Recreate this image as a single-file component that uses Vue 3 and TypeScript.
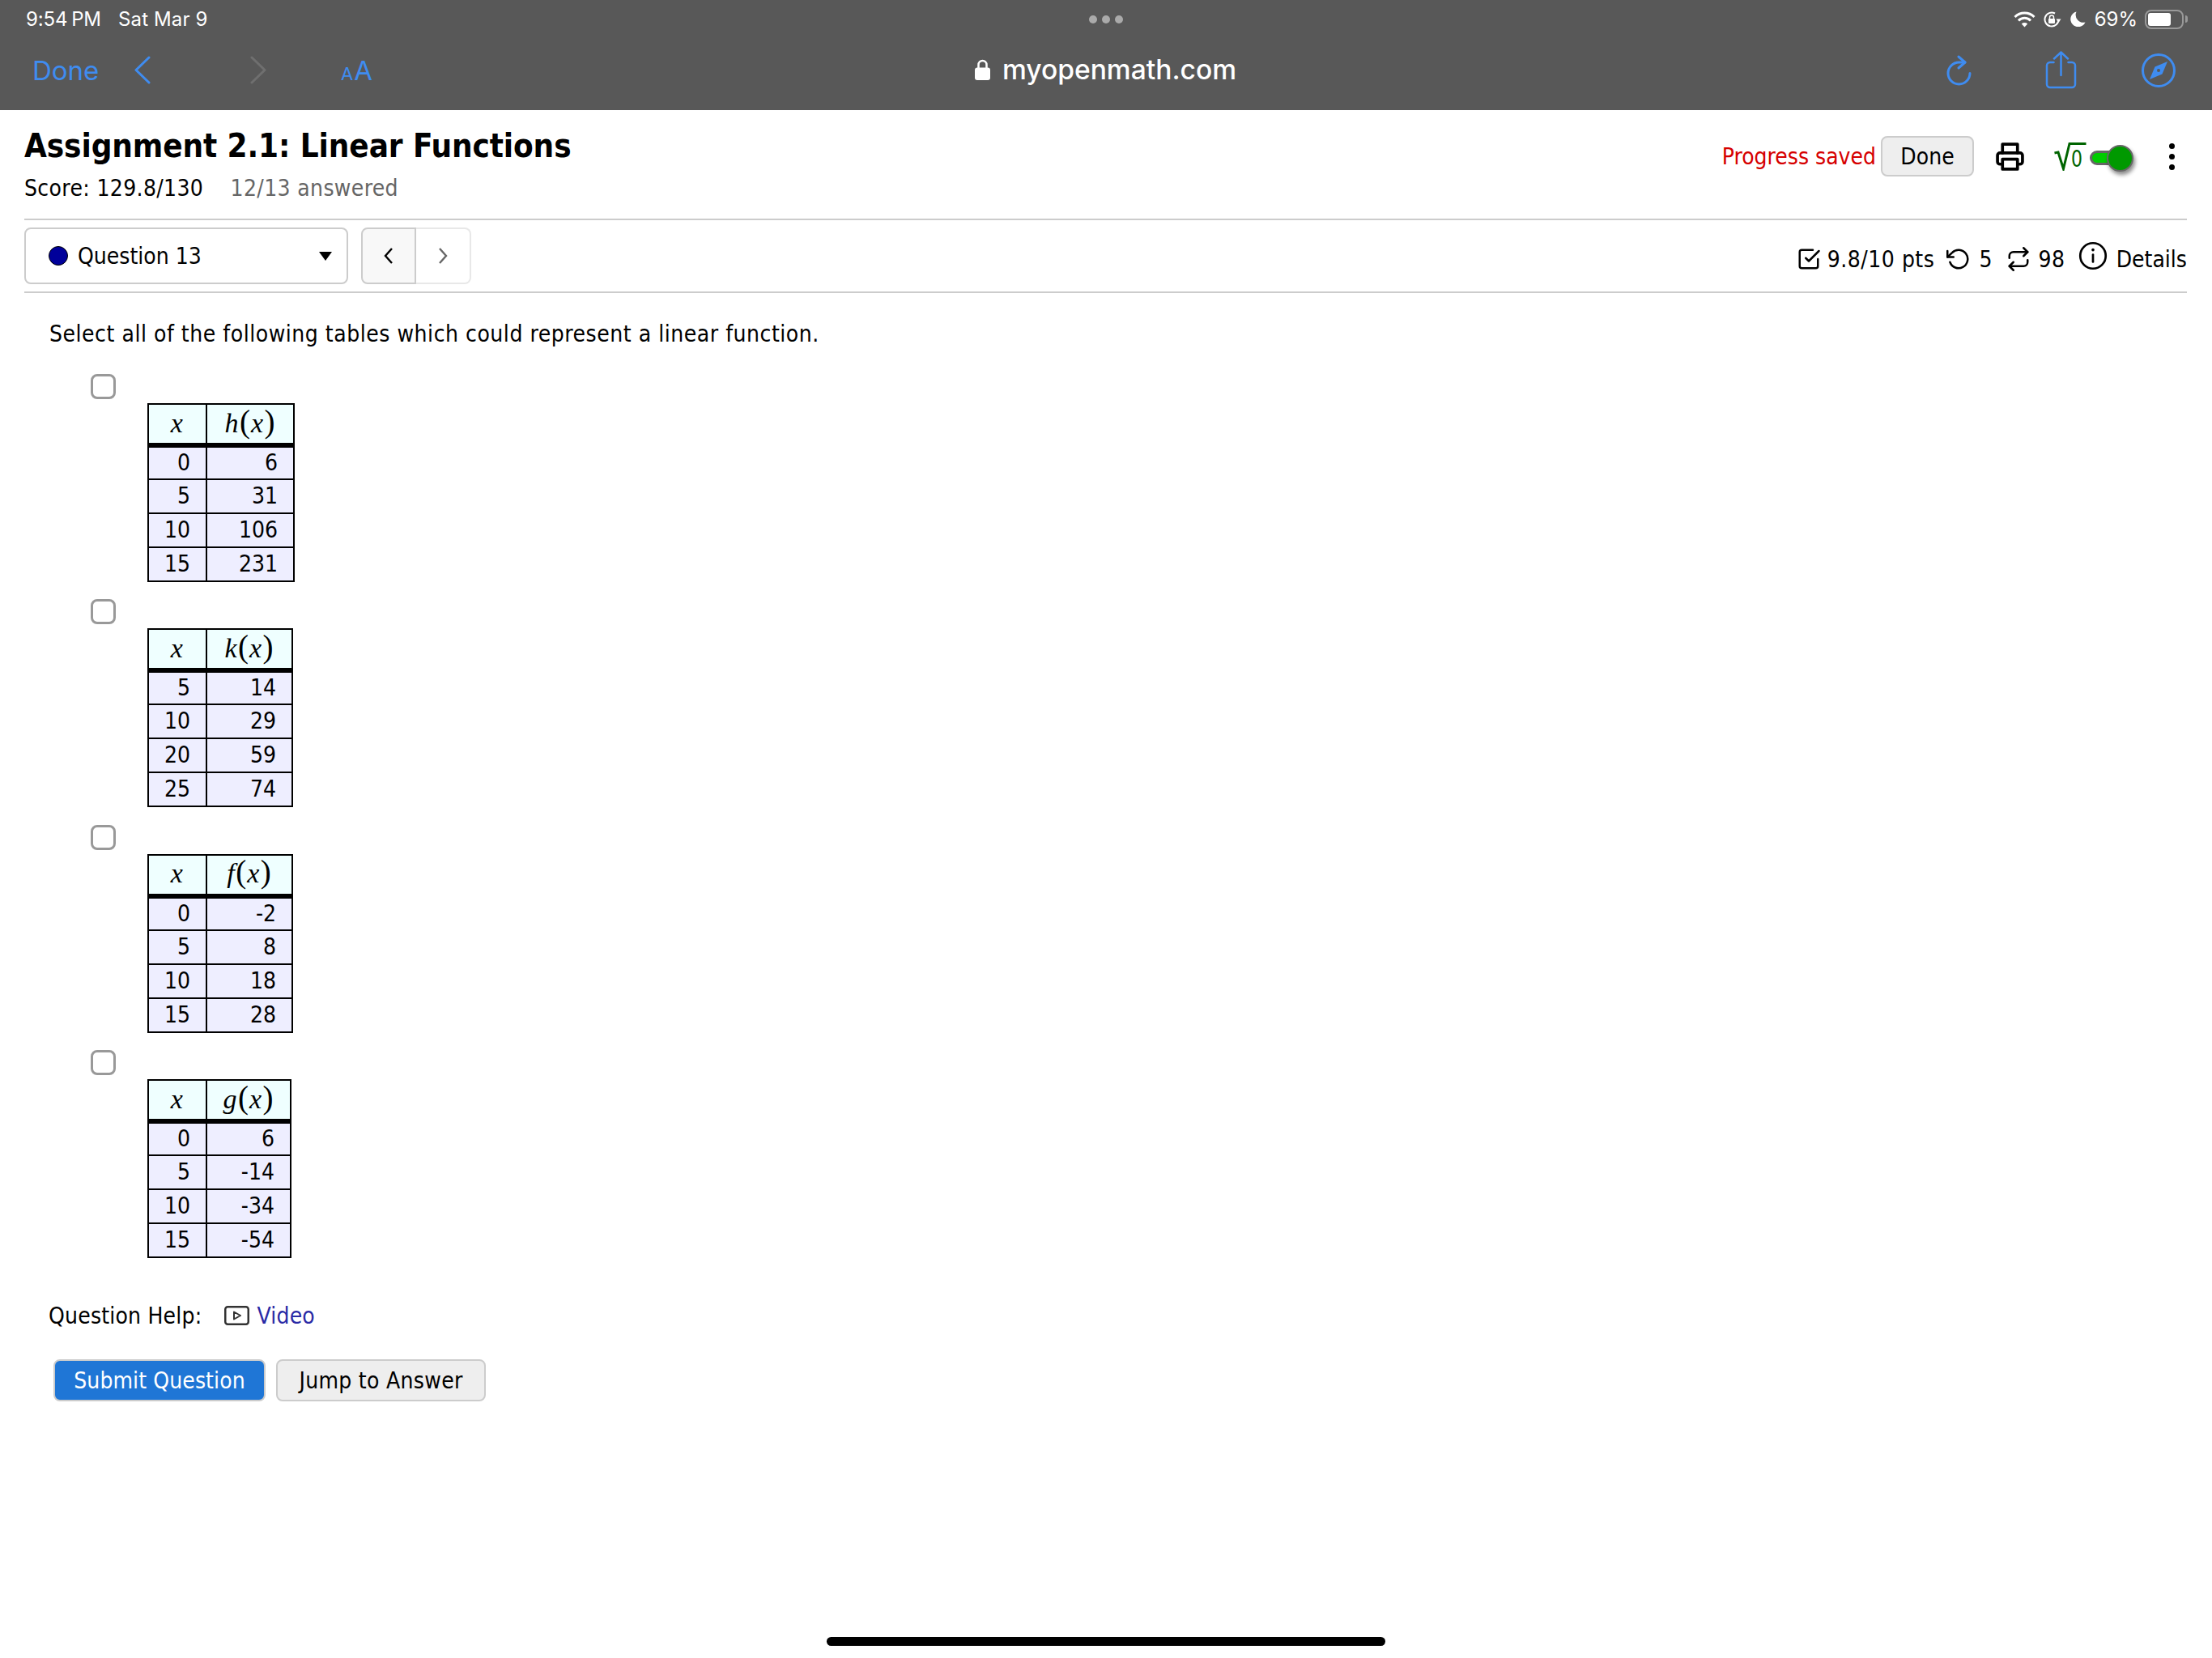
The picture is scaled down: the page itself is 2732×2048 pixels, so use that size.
<script setup lang="ts">
interface Opt { fn: string; width: number; rows: [string, string][] }
const options: Opt[] = [
  { fn: 'h', width: 108, rows: [['0', '6'], ['5', '31'], ['10', '106'], ['15', '231']] },
  { fn: 'k', width: 106, rows: [['5', '14'], ['10', '29'], ['20', '59'], ['25', '74']] },
  { fn: 'f', width: 106, rows: [['0', '-2'], ['5', '8'], ['10', '18'], ['15', '28']] },
  { fn: 'g', width: 104, rows: [['0', '6'], ['5', '-14'], ['10', '-34'], ['15', '-54']] },
]
</script>

<template>
  <div class="page">
    <header class="chrome">
      <div class="status">
        <div class="status-left">
          <span class="time">9:54 PM</span>
          <span class="date">Sat Mar 9</span>
        </div>
        <div class="dots"><i></i><i></i><i></i></div>
        <div class="status-right">
          <svg class="wifi" viewBox="0 0 27 20" width="27" height="20">
            <path d="M1.500 7a17 17 0 0 1 24 0" fill="none" stroke="#fff" stroke-width="3" />
            <path d="M6 11.500a10.500 10.500 0 0 1 15 0" fill="none" stroke="#fff" stroke-width="3" />
            <path d="M9.800 15.500a5.500 5.500 0 0 1 7.400 0l-3.700 4z" fill="#fff" />
          </svg>
          <svg class="rot" viewBox="0 0 22 20" width="22" height="20">
            <path d="M18.500 10A8.500 8.500 0 1 1 14 2.500" fill="none" stroke="#fff" stroke-width="2" />
            <path d="M15.500 9.500h6L18.500 14z" fill="#fff" />
            <rect x="6" y="9" width="8" height="6" rx="1" fill="#fff" />
            <path d="M7.500 10V7.500a2.500 2.500 0 0 1 5 0V10" fill="none" stroke="#fff" stroke-width="1.500" />
          </svg>
          <svg class="moon" viewBox="0 0 19 19" width="19" height="19">
            <path d="M7.500.5A9.500 9.500 0 1 0 18.500 13.500 9.500 9.500 0 0 1 7.500.5z" fill="#fff" />
          </svg>
          <span class="pct">69%</span>
          <div class="battery"><div class="battery-fill"></div></div>
          <div class="battery-nub"></div>
        </div>
      </div>
      <div class="toolbar">
        <div class="tool-left">
          <span class="done-link">Done</span>
          <svg class="chev" viewBox="0 0 21 35" width="21" height="35">
            <path d="M19 2L3 17.500 19 33" fill="none" stroke="#3f8cf0" stroke-width="3" stroke-linecap="round" stroke-linejoin="round" />
          </svg>
          <svg class="chev-fwd" viewBox="0 0 21 35" width="21" height="35">
            <path d="M2 2l16 15.500L2 33" fill="none" stroke="#6f6f6f" stroke-width="3" stroke-linecap="round" stroke-linejoin="round" />
          </svg>
          <span class="aa"><small>A</small>A</span>
        </div>
        <div class="url">
          <svg viewBox="0 0 19 26" width="19" height="26">
            <path d="M4.500 12V7a5 5 0 0 1 10 0v5" fill="none" stroke="#fff" stroke-width="2.500" />
            <rect x="0" y="10.500" width="19" height="15.500" rx="3" fill="#fff" />
          </svg>
          <span>myopenmath.com</span>
        </div>
        <div class="tool-right">
          <svg viewBox="0 0 30 35" width="30" height="35">
            <path d="M28 21.500A13.500 13.500 0 1 1 14.500 8H22" fill="none" stroke="#3f8cf0" stroke-width="3" stroke-linecap="round" />
            <path d="M14 1l8 7-8 7" fill="none" stroke="#3f8cf0" stroke-width="3" stroke-linecap="round" stroke-linejoin="round" />
          </svg>
          <svg viewBox="0 0 39 46" width="39" height="46">
            <path d="M10.500 14H6a4 4 0 0 0-4 4v23a4 4 0 0 0 4 4h27a4 4 0 0 0 4-4V18a4 4 0 0 0-4-4h-4.500" fill="none" stroke="#3f8cf0" stroke-width="2.500" stroke-linecap="round" />
            <path d="M19.500 30V1.500M11 9.500l8.500-8 8.500 8" fill="none" stroke="#3f8cf0" stroke-width="2.500" stroke-linecap="round" stroke-linejoin="round" />
          </svg>
          <svg viewBox="0 0 42 42" width="42" height="42">
            <circle cx="21" cy="21" r="19.500" fill="none" stroke="#3f8cf0" stroke-width="3" />
            <path d="M32 10L25.500 25.500 10 32 16.500 16.500z" fill="#3f8cf0" />
            <circle cx="21" cy="21" r="2" fill="#585858" />
          </svg>
        </div>
      </div>
    </header>

    <main class="content">
      <section class="title-row">
        <div>
          <h1>Assignment 2.1: Linear Functions</h1>
          <p class="score">Score: 129.8/130 <span>12/13 answered</span></p>
        </div>
        <div class="title-actions">
          <span class="saved">Progress saved</span>
          <button class="btn done">Done</button>
          <svg class="printer" viewBox="0 0 24 24" width="37" height="37" fill="none" stroke="#000" stroke-width="2.400" stroke-linecap="round" stroke-linejoin="round">
            <polyline points="6 9 6 2 18 2 18 9" />
            <path d="M6 18H4a2 2 0 0 1-2-2v-5a2 2 0 0 1 2-2h16a2 2 0 0 1 2 2v5a2 2 0 0 1-2 2h-2" />
            <rect x="6" y="14" width="12" height="8" />
          </svg>
          <svg class="sqrt" viewBox="0 0 40 36" width="40" height="36">
            <path d="M.5 14l4.500-1 6.500 20.500L19 2.500h20.500" fill="none" stroke="#006400" stroke-width="3" />
            <text x="21" y="30.500" font-size="29" textLength="14" lengthAdjust="spacingAndGlyphs" font-family="'DejaVu Sans', sans-serif" fill="#006400">0</text>
          </svg>
          <div class="toggle"><div class="knob"></div></div>
          <div class="kebab"><i></i><i></i><i></i></div>
        </div>
      </section>

      <section class="nav-row">
        <div class="nav-left">
          <div class="select">
            <span class="qdot"></span>
            <span class="qname">Question 13</span>
            <span class="caret"></span>
          </div>
          <div class="pager">
            <div class="page-btn prev">
              <svg viewBox="0 0 14 22" width="14" height="22"><path d="M11 2L3 11l8 9" fill="none" stroke="#000" stroke-width="2.400" /></svg>
            </div>
            <div class="page-btn next">
              <svg viewBox="0 0 14 22" width="14" height="22"><path d="M3 2l8 9-8 9" fill="none" stroke="#666" stroke-width="2.400" /></svg>
            </div>
          </div>
        </div>
        <div class="meta">
          <svg viewBox="0 0 24 24" width="30" height="30" fill="none" stroke="#000" stroke-width="2" stroke-linecap="round" stroke-linejoin="round">
            <polyline points="9 11 12 14 22 4" />
            <path d="M21 12v7a2 2 0 0 1-2 2H5a2 2 0 0 1-2-2V5a2 2 0 0 1 2-2h11" />
          </svg>
          <span class="m1">9.8/10 pts</span>
          <svg class="m2" viewBox="0 0 24 24" width="30" height="30" fill="none" stroke="#000" stroke-width="2" stroke-linecap="round" stroke-linejoin="round">
            <polyline points="1 4 1 10 7 10" />
            <path d="M3.510 15a9 9 0 1 0 2.130-9.360L1 10" />
          </svg>
          <span class="m3">5</span>
          <svg class="m4" viewBox="0 0 24 24" width="30" height="32" fill="none" stroke="#000" stroke-width="2" stroke-linecap="round" stroke-linejoin="round">
            <polyline points="17 1 21 5 17 9" />
            <path d="M3 11V9a4 4 0 0 1 4-4h14" />
            <polyline points="7 23 3 19 7 15" />
            <path d="M21 13v2a4 4 0 0 1-4 4H3" />
          </svg>
          <span class="m5">98</span>
          <svg class="info" viewBox="0 0 24 24" width="36" height="36" fill="none" stroke="#000" stroke-width="1.800" stroke-linecap="round">
            <circle cx="12" cy="12" r="10.500" />
            <line x1="12" y1="11" x2="12" y2="17" />
            <line x1="12" y1="7" x2="12" y2="7.200" stroke-width="2.400" />
          </svg>
          <span class="m6">Details</span>
        </div>
      </section>

      <section class="question">
        <p class="prompt">Select all of the following tables which could represent a linear function.</p>
        <div class="options">
          <div v-for="o in options" :key="o.fn" class="option">
            <div class="checkbox"></div>
            <table>
              <thead>
                <tr>
                  <th class="c1"><span class="math"><i>x</i></span></th>
                  <th :style="{ width: o.width + 'px' }"><span class="math"><i>{{ o.fn }}</i><span class="paren">(</span><i>x</i><span class="paren">)</span></span></th>
                </tr>
              </thead>
              <tbody>
                <tr v-for="r in o.rows" :key="r[0]">
                  <td>{{ r[0] }}</td>
                  <td>{{ r[1] }}</td>
                </tr>
              </tbody>
            </table>
          </div>
        </div>
        <div class="help">
          <span>Question Help:</span>
          <svg viewBox="0 0 31 24" width="31" height="24">
            <rect x="1.250" y="1.250" width="28.500" height="21.500" rx="3" fill="none" stroke="#333" stroke-width="2.500" />
            <path d="M12 7.500l8 4.500-8 4.500z" fill="none" stroke="#333" stroke-width="2" stroke-linejoin="round" />
          </svg>
          <a class="video">Video</a>
        </div>
        <div class="actions">
          <button class="btn submit">Submit Question</button>
          <button class="btn jump">Jump to Answer</button>
        </div>
      </section>
    </main>

    <div class="home"></div>
  </div>
</template>

<style scoped>
.page {
  width: 2732px;
  height: 2048px;
  display: flex;
  flex-direction: column;
  background: #fff;
  overflow: hidden;
  font-family: "DejaVu Sans Condensed", "DejaVu Sans", sans-serif;
  font-size: 28px;
  color: #000;
}
.chrome {
  height: 136px;
  flex: none;
  background: #585858;
  font-family: Inter, sans-serif;
}
.status {
  height: 47px;
  display: grid;
  grid-template-columns: 1fr auto 1fr;
  align-items: center;
  padding: 0 30px 0 32px;
  color: #fff;
  font-size: 24px;
}
.status-left { display: flex; gap: 21px; }
.time { word-spacing: -2px; letter-spacing: -0.1px; }
.date { letter-spacing: 0.15px; }
.dots { display: flex; gap: 6px; margin-right: 3px; }
.dots i { width: 10px; height: 10px; border-radius: 50%; background: #aaa; }
.status-right { display: flex; align-items: center; justify-content: flex-end; }
.rot { margin-left: 10px; }
.moon { margin-left: 11px; }
.pct { margin-left: 11px; }
.battery {
  width: 48px;
  height: 24px;
  margin-left: 9px;
  padding: 2px;
  border: 2px solid #999;
  border-radius: 8px;
  box-sizing: border-box;
}
.battery-fill { width: 28px; height: 100%; background: #fff; border-radius: 3px; }
.battery-nub { width: 3px; height: 9px; margin-left: 2px; background: #999; border-radius: 0 3px 3px 0; }
.toolbar {
  height: 89px;
  box-sizing: border-box;
  padding: 0 45px 10px 40px;
  display: grid;
  grid-template-columns: 1fr auto 1fr;
  align-items: center;
}
.tool-left { display: flex; align-items: center; color: #3f8cf0; }
.done-link { font-size: 33px; width: 80px; }
.chev { margin-left: 45px; }
.chev-fwd { margin-left: 123px; }
.aa { margin-left: 91px; font-size: 33px; line-height: 1; margin-top: 2px; }
.aa small { font-size: 22px; margin-right: 1px; }
.url {
  display: flex;
  align-items: center;
  gap: 15px;
  margin: 0 0 2px 4px;
  color: #fff;
  font-size: 33.600px;
  font-weight: 500;
}
.tool-right { display: flex; align-items: center; justify-content: flex-end; gap: 91px; }
.tool-right svg { overflow: visible; }
.tool-right svg:nth-child(2) { margin-bottom: 2px; }
.tool-right svg:nth-child(3) { margin-left: -11px; }
.content {
  flex: none;
  padding: 0 31px 0 30px;
}
.title-row {
  height: 136px;
  box-sizing: border-box;
  display: flex;
  justify-content: space-between;
  align-items: flex-start;
  padding-top: 22px;
  border-bottom: 2px solid #ccc;
}
h1 { margin: 0; font-size: 40px; line-height: 44px; font-weight: 700; letter-spacing: -0.1px; }
.score { margin: 13px 0 0; line-height: 36px; letter-spacing: 0.35px; }
.score span { margin-left: 25px; color: #666; }
.title-actions { display: flex; align-items: center; margin-top: 10px; height: 50px; }
.saved { color: #d60000; margin-right: 6px; }
.btn {
  font: inherit;
  box-sizing: border-box;
  height: 52px;
  border: 2px solid #ccc;
  border-radius: 8px;
  background: #eee;
  color: #000;
  padding: 0;
}
.done { width: 115px; height: 50px; }
.printer { margin-left: 26px; }
.sqrt { margin-left: 36px; }
.toggle {
  position: relative;
  width: 38px;
  height: 18px;
  margin: 4px 0 0 4px;
  box-sizing: border-box;
  background: #0c0;
  border: 3px solid #666;
  border-radius: 9px;
}
.knob {
  position: absolute;
  left: 18px;
  top: -10px;
  width: 33px;
  height: 33px;
  box-sizing: border-box;
  border-radius: 50%;
  background: #090;
  border: 2px solid #666;
  box-shadow: 2px 4px 5px rgba(0, 0, 0, 0.45);
}
.kebab { display: flex; flex-direction: column; gap: 6px; margin: 0 15px 0 60px; }
.kebab i { width: 7px; height: 7px; border-radius: 50%; background: #000; }
.nav-row {
  height: 90px;
  box-sizing: border-box;
  padding: 9px 0;
  display: flex;
  justify-content: space-between;
  border-bottom: 2px solid #ccc;
}
.nav-left { display: flex; gap: 16px; }
.select {
  width: 400px;
  height: 70px;
  box-sizing: border-box;
  border: 2px solid #ccc;
  border-radius: 8px;
  display: flex;
  align-items: center;
  padding: 0 18px 0 28px;
}
.qdot {
  width: 24px;
  height: 24px;
  box-sizing: border-box;
  border-radius: 50%;
  background: #00009a;
  border: 1.500px solid #000;
  margin-right: 12px;
}
.qname { flex: 1; }
.caret { width: 0; height: 0; border: 8px solid transparent; border-top: 11px solid #000; border-bottom: 0; }
.pager { display: flex; height: 70px; }
.page-btn {
  display: flex;
  align-items: center;
  justify-content: center;
  box-sizing: border-box;
  border: 2px solid #ccc;
  height: 70px;
}
.prev { width: 68px; background: #f8f8f8; border-radius: 8px 0 0 8px; }
.next { width: 68px; border-color: #e8e8e8; border-left: 0; border-radius: 0 8px 8px 0; }
.meta { display: flex; align-items: center; padding-top: 8px; height: 62px; }
.m1 { margin-left: 8px; letter-spacing: 0.5px; }
.m2 { margin-left: 15px; }
.m3 { margin-left: 10px; }
.m4 { margin-left: 18px; }
.m5 { margin-left: 9px; letter-spacing: 0.6px; }
.info { margin-left: 16px; margin-top: -9px; }
.m6 { margin-left: 11px; }
.question { padding: 33px 0 0 30px; }
.prompt { margin: 0 0 0 1px; line-height: 36px; letter-spacing: 0.53px; }
.options { margin: 31px 0 0 1px; display: flex; flex-direction: column; gap: 22.400px; }
.option { height: 256px; }
.checkbox {
  width: 31px;
  height: 31px;
  box-sizing: border-box;
  margin-left: 51px;
  border: 3px solid #999;
  border-radius: 8px;
}
table {
  margin: 5px 0 0 121px;
  border-collapse: collapse;
  border: 2px solid #000;
  font-size: 28px;
  line-height: 1;
}
th, td { border: 2px solid #000; padding: 0 19px 0 8px; box-sizing: border-box; }
th { height: 51px; background: #efffff; font-weight: 400; text-align: center; padding: 0 0 2px; border-bottom: 6px solid #000; }
.c1 { width: 72px; }
td { height: 42px; background: #eef; text-align: right; }
.math { font-family: "Liberation Serif", serif; font-size: 34px; letter-spacing: 1.500px; }
.paren { font-size: 39px; line-height: 0; letter-spacing: 1px; }
.help { display: flex; align-items: center; margin-top: 54px; height: 36px; letter-spacing: 0.2px; }
.help svg { margin-left: 28px; }
.video { margin-left: 9px; color: #2a2aa5; }
.actions { display: flex; gap: 13px; margin: 36px 0 0 6px; }
.submit { width: 262px; background: #1f76d6; color: #fff; letter-spacing: 0.1px; }
.jump { width: 259px; letter-spacing: 0.3px; }
.home {
  margin: auto auto 15px;
  width: 690px;
  height: 11px;
  background: #000;
  border-radius: 5.500px;
  flex: none;
}
</style>

<style>
body { background: #fff; }
</style>
